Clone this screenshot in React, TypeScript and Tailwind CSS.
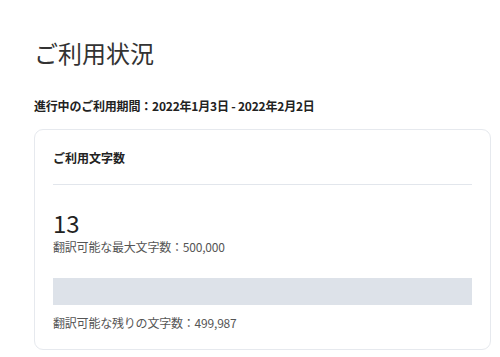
import React from "react";

const usage = {
  period: "2022年1月3日 - 2022年2月2日",
  used: 13,
  max: 500000,
};

export default function App() {
  const remaining = usage.max - usage.used;
  const pct = (usage.used / usage.max) * 100;

  return (
    <div
      className="w-[500px] h-[357px] bg-white pl-[34px] pr-[9px] text-[#333]"
      style={{ fontFamily: '"Noto Sans CJK JP", "Noto Sans", sans-serif' }}
    >
      {/* タイトル */}
      <h1 className="pt-[37px] text-[24px] leading-[32px] font-normal">ご利用状況</h1>

      <p className="mt-[28px] text-[12px] leading-[18px] font-bold text-[#222] tracking-[-0.2px]">
        進行中のご利用期間：{usage.period}
      </p>

      {/* 利用文字数カード */}
      <div className="mt-[14px] border border-[#e6e9ee] rounded-[9px] px-[18px] pb-[17px]">
        <div className="pt-[19px] pb-[17px] border-b border-[#e2e6ec]">
          <h2 className="text-[12px] leading-[18px] font-bold text-[#222]">ご利用文字数</h2>
        </div>

        <div className="mt-[24px] text-[24px] leading-[28px] text-[#222]">{usage.used}</div>
        <p className="mt-[1px] text-[12px] leading-[18px] text-[#555] tracking-[-0.2px]">
          翻訳可能な最大文字数：{usage.max.toLocaleString("en-US")}
        </p>

        <div className="mt-[22px] h-[27px] bg-[#dde2e9]">
          <div className="h-full bg-[#3b82f6]" style={{ width: `${pct}%` }} />
        </div>

        <p className="mt-[9px] text-[12px] leading-[18px] text-[#555] tracking-[-0.2px]">
          翻訳可能な残りの文字数：{remaining.toLocaleString("en-US")}
        </p>
      </div>
    </div>
  );
}
